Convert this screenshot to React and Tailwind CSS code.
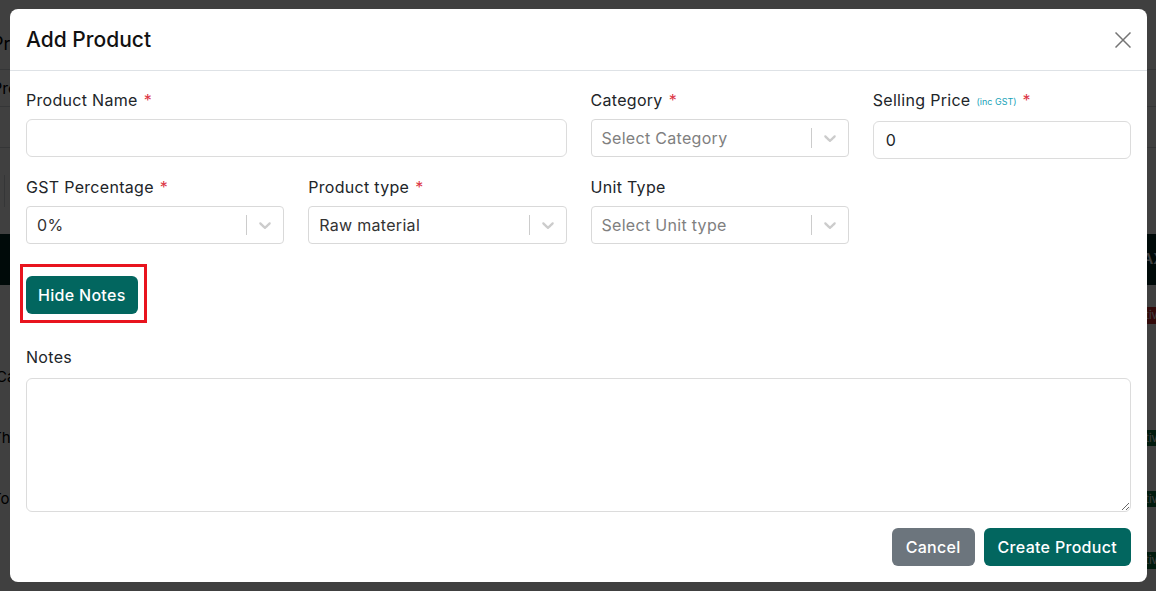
const font = { fontFamily: 'Inter, "Noto Sans", sans-serif' };

function Chevron() {
  return (
    <svg viewBox="0 0 20 20" className="w-5 h-5" fill="#cccccc">
      <path d="M4.516 7.548c0.436-0.446 1.043-0.481 1.576 0l3.908 3.747 3.908-3.747c0.533-0.481 1.141-0.446 1.574 0 0.436 0.445 0.408 1.197 0 1.615-0.406 0.418-4.695 4.502-4.695 4.502-0.217 0.223-0.502 0.335-0.787 0.335s-0.57-0.112-0.789-0.335c0 0-4.287-4.084-4.695-4.502s-0.436-1.17 0-1.615z" />
    </svg>
  );
}

function Label({ children, required, extra }) {
  return (
    <label className="block text-[16px] leading-[22px] tracking-[0.3px] text-[#212529] mb-[8px]">
      {children}
      {extra && <span className="text-[9px] tracking-normal text-[#17a2b8] ml-[6px] align-middle">{extra}</span>}
      {required && <span className="text-[#dc3545] ml-[6px]">*</span>}
    </label>
  );
}

function Select({ value, placeholder }) {
  return (
    <div className="flex items-center h-[38px] border border-[#d9d9d9] rounded-[4px] bg-white">
      <div className={`flex-1 pl-[10px] text-[16px] tracking-[0.3px] ${value ? 'text-[#333333]' : 'text-[#808080]'}`}>
        {value || placeholder}
      </div>
      <span className="w-px h-5 bg-[#cccccc]" />
      <div className="w-9 flex items-center justify-center">
        <Chevron />
      </div>
    </div>
  );
}

function Input({ value }) {
  return (
    <input
      defaultValue={value}
      className="w-full h-[38px] border border-[#dcdcdc] rounded-[6px] px-3 text-[16px] text-[#212529] outline-none"
    />
  );
}

function BackgroundPage() {
  return (
    <div className="absolute inset-0 bg-white flex flex-col">
      <div className="h-[72px] border-b border-gray-300 flex items-end pb-3">
        <span className="text-[18px] text-black -ml-2">Products</span>
      </div>
      <div className="h-[38px] border-b border-gray-300 flex items-center">
        <span className="text-[16px] -ml-2">Product</span>
      </div>
      <div className="h-[42px] border-b border-gray-300" />
      <div className="h-[88px] flex items-center pl-1">
        <div className="w-px h-8 bg-gray-300" />
      </div>
      <div className="h-[53px] bg-[#002a25] flex items-center justify-end">
        <span className="text-white text-[15px] font-semibold -mr-2">TAX</span>
      </div>
      <div className="h-[63px] flex items-center justify-end">
        <span className="bg-[#c62828] text-white text-[11px] px-2 rounded -mr-4">Inactive</span>
      </div>
      <div className="h-[63px] flex items-center justify-between">
        <span className="text-[15px] -ml-1">Capsicum</span>
      </div>
      <div className="h-[63px] flex items-center justify-between">
        <span className="text-[15px] -ml-2">This</span>
        <span className="bg-[#0b6b3a] text-white text-[11px] px-2 rounded -mr-4">Active</span>
      </div>
      <div className="h-[63px] flex items-center justify-between">
        <span className="text-[15px] -ml-2">To J</span>
        <span className="bg-[#0b6b3a] text-white text-[11px] px-2 rounded -mr-4">Active</span>
      </div>
      <div className="h-[63px] flex items-center justify-end">
        <span className="bg-[#0b6b3a] text-white text-[11px] px-2 rounded -mr-4">Active</span>
      </div>
    </div>
  );
}

export default function App() {
  return (
    <div className="relative w-full h-[591px] overflow-hidden" style={font}>
      <BackgroundPage />
      <div className="absolute inset-0 bg-black/75 pt-[9px] pl-[10px] pr-[9px]">
        <div className="w-[1137px] h-[573px] bg-white rounded-[8px] flex flex-col">
          <div className="h-[62px] px-4 flex items-center justify-between border-b border-[#dee2e6] shrink-0">
            <h2 className="text-[21px] font-medium text-[#111111]">Add Product</h2>
            <button className="w-4 h-4 flex items-center justify-center">
              <svg viewBox="0 0 16 16" className="w-4 h-4" stroke="#747474" strokeWidth="1.5" fill="none">
                <path d="M0.5 0.5l15 15M15.5 0.5l-15 15" />
              </svg>
            </button>
          </div>

          <div className="px-4 pt-[18px] pb-4 flex flex-col flex-1">
            <div className="grid grid-cols-4 gap-x-6 gap-y-[9px]">
              <div className="col-span-2">
                <Label required>Product Name</Label>
                <Input />
              </div>
              <div>
                <Label required>Category</Label>
                <Select placeholder="Select Category" />
              </div>
              <div>
                <Label required extra="(inc GST)">Selling Price</Label>
                <Input value="0" />
              </div>
              <div className="mt-2">
                <Label required>GST Percentage</Label>
                <Select value="0%" />
              </div>
              <div className="mt-2">
                <Label required>Product type</Label>
                <Select value="Raw material" />
              </div>
              <div className="mt-2">
                <Label>Unit Type</Label>
                <Select placeholder="Select Unit type" />
              </div>
            </div>

            <div className="mt-8 relative self-start">
              <button className="h-[38px] px-3 bg-[#02665f] text-white text-[16px] tracking-[0.3px] font-medium rounded-[6px]">
                Hide Notes
              </button>
              <div className="absolute left-[-6px] right-[-9px] top-[-12px] bottom-[-9px] border-[3px] border-[#e8141e] pointer-events-none" />
            </div>

            <div className="mt-8">
              <label className="block text-[16px] leading-[22px] tracking-[0.3px] text-[#212529] mb-[10px]">Notes</label>
              <textarea className="w-full h-[134px] border border-[#dcdcdc] rounded-[6px] p-3 text-[16px] outline-none block" />
            </div>

            <div className="mt-4 flex justify-end gap-[9px]">
              <button className="h-[38px] px-[14px] bg-[#6c757d] text-white text-[16px] tracking-[0.3px] font-medium rounded-[6px]">
                Cancel
              </button>
              <button className="h-[38px] px-[14px] bg-[#02665f] text-white text-[16px] tracking-[0.3px] font-medium rounded-[6px]">
                Create Product
              </button>
            </div>
          </div>
        </div>
      </div>
    </div>
  );
}
